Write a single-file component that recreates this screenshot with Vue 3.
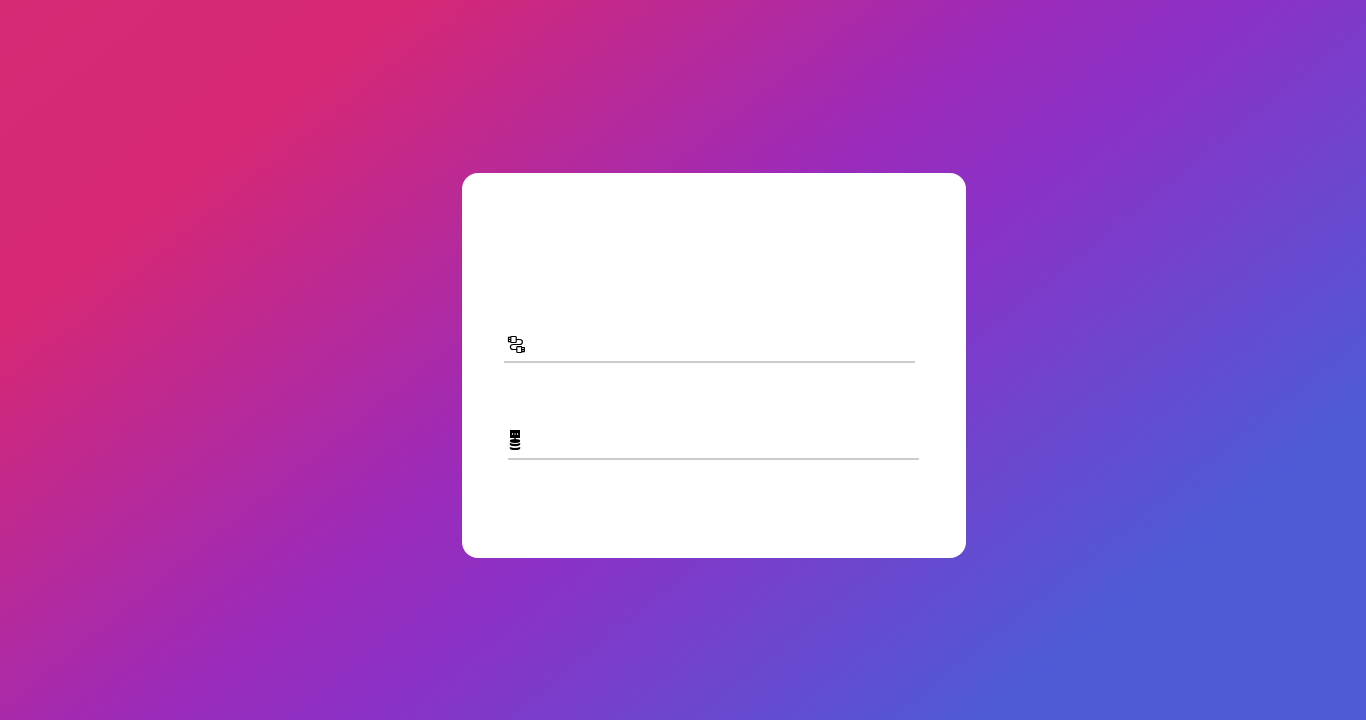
<script setup>
import { ref } from 'vue'

const connection = ref('')
const database = ref('')
</script>

<template>
  <main class="page">
    <form class="card" @submit.prevent>
      <label class="field">
        <svg class="icon" viewBox="0 0 18 22" fill="none" stroke="#000" aria-hidden="true">
          <path d="M4.5 2.5H8.5Q9.2 2.5 9.2 3.2V7.8Q9.2 8.5 8.5 8.5H4.5Q3.8 8.5 3.8 7.8V3.2Q3.8 2.5 4.5 2.5Z" stroke-width="1.2" />
          <path d="M3.8 3.3H1.5V7.7H3.8M1.5 5.5H3.8M9.2 5.5H12.5Q15.4 5.5 15.4 8Q15.4 10.5 12.5 10.5H6.2Q3.4 10.5 3.4 13Q3.4 15.5 6.2 15.5H9.8" stroke-width="1.2" />
          <path d="M10.5 12.7H14Q14.7 12.7 14.7 13.4V17.8Q14.7 18.5 14 18.5H10.5Q9.8 18.5 9.8 17.8V13.4Q9.8 12.7 10.5 12.7Z" stroke-width="1.2" />
          <path d="M14.7 13.5H17.3V17.7H14.7M14.7 15.6H17.3" stroke-width="1.2" />
        </svg>
        <input v-model="connection" type="text" aria-label="Connection" />
      </label>
      <label class="field shifted">
        <svg class="icon" viewBox="0 0 18 22" aria-hidden="true">
          <path d="M2 1H12V9H7.7V10.4H6.3V9H2Z" />
          <path d="M4 5H5M6.5 5H7.5M9 5H10" stroke="#fff" stroke-width="1.3" />
          <ellipse cx="7" cy="12" rx="5.2" ry="1.9" />
          <path d="M1.8 14Q7 16.2 12.2 14V15.5Q11.5 17.2 7 17.2T1.8 15.5ZM1.8 18Q7 20.2 12.2 18V19.4Q11.5 21.1 7 21.1T1.8 19.4Z" />
        </svg>
        <input v-model="database" type="text" aria-label="Database" />
      </label>
    </form>
  </main>
</template>

<style>
body {
  margin: 0;
}
</style>

<style scoped>
.page {
  box-sizing: border-box;
  min-height: 100vh;
  display: flex;
  align-items: center;
  justify-content: center;
  padding: 11px 0 0 62px;
  background: linear-gradient(141deg, #d62a75 0%, #d62874 18%, #9b2bba 46%, #8a32c7 56%, #4e5bd5 83%, #4e5bd5 100%);
}

.card {
  box-sizing: border-box;
  width: 504px;
  max-width: 100%;
  padding: 160px 47px 98px 42px;
  border-radius: 16px;
  background: #fff;
}

.field {
  box-sizing: border-box;
  display: flex;
  align-items: center;
  width: 411px;
  max-width: 100%;
  height: 30px;
  padding: 0 0 4px 3px;
  border-bottom: 2px solid #ccc;
}

.field.shifted {
  height: 33px;
  margin: 64px 0 0 4px;
  padding: 0 0 5px;
}

.icon {
  flex: none;
  width: 18px;
  height: 22px;
}

input {
  flex: 1;
  min-width: 0;
  height: 20px;
  padding: 0 8px;
  border: 0;
  outline: none;
  background: transparent;
  color: #222;
  font: 14px "Open Sans", sans-serif;
}
</style>
